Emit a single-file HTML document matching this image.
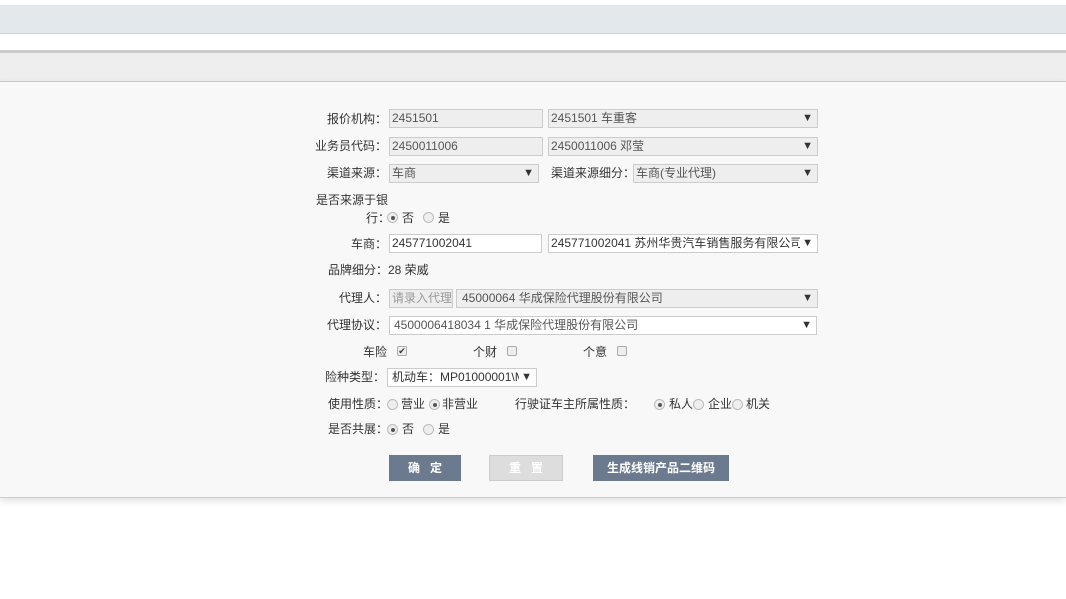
<!DOCTYPE html>
<html><head><meta charset="utf-8"><style>
*{margin:0;padding:0;box-sizing:border-box}
body{width:1066px;height:599px;background:#fff;position:relative;overflow:hidden;font-family:"Liberation Sans","Noto Sans CJK SC",sans-serif;font-size:12px;color:#333}
.a{position:absolute;white-space:nowrap;line-height:14px}
.lab{position:absolute;text-align:right;white-space:nowrap;line-height:14px}
.in{position:absolute;border:1px solid #ccc;background:#eee;height:19px;line-height:17px;padding-left:2px;color:#555;overflow:hidden;white-space:nowrap}
.w{background:#fff}
.sel:after{content:"▼";position:absolute;right:4px;top:0;font-size:11px;color:#333;background:inherit;padding-left:2px}
.r{position:absolute;width:11px;height:11px;border:1px solid #bbb;border-radius:50%;background:#eee}
.r.on:after{content:"";position:absolute;left:2.5px;top:2.5px;width:4px;height:4px;border-radius:50%;background:#555}
.c{position:absolute;width:10px;height:10px;border:1px solid #aaa;border-radius:2px;background:#eee}
.btn{position:absolute;height:26px;line-height:26px;text-align:center;color:#fff;font-weight:bold;background:#6b7a8f}
</style></head><body>
<div style="position:absolute;left:0;top:5px;width:1066px;height:29px;background:#e3e8ec;border-bottom:1px solid #cdd0d3"></div>
<div style="position:absolute;left:0;top:50px;width:1066px;height:3px;background:#ccc"></div>
<div style="position:absolute;left:0;top:53px;width:1066px;height:29px;background:#eee;border-bottom:1px solid #ccc"></div>
<div style="position:absolute;left:0;top:82px;width:1066px;height:416px;background:#f8f8f8;border-bottom:1px solid #ccc;box-shadow:0 3px 8px rgba(0,0,0,0.12)"></div>

<div class="lab" style="right:679px;top:112px">报价机构：</div>
<div class="in" style="left:389px;top:109px;width:154px">2451501</div>
<div class="in sel" style="left:548px;top:109px;width:270px">2451501 车重客</div>

<div class="lab" style="right:679px;top:139px">业务员代码：</div>
<div class="in" style="left:389px;top:137px;width:154px">2450011006</div>
<div class="in sel" style="left:548px;top:137px;width:270px">2450011006 邓莹</div>

<div class="lab" style="right:679px;top:166px">渠道来源：</div>
<div class="in sel" style="left:389px;top:164px;width:150px">车商</div>
<div class="a" style="left:551px;top:166px">渠道来源细分：</div>
<div class="in sel" style="left:633px;top:164px;width:185px">车商(专业代理)</div>

<div class="a" style="left:316px;top:193px">是否来源于银</div>
<div class="a" style="left:366px;top:211px">行：</div>
<div class="r on" style="left:387px;top:212px"></div><div class="a" style="left:402px;top:211px">否</div>
<div class="r" style="left:423px;top:212px"></div><div class="a" style="left:438px;top:211px">是</div>

<div class="lab" style="right:679px;top:237px">车商：</div>
<div class="in w" style="left:389px;top:234px;width:153px;color:#333">245771002041</div>
<div class="in w sel" style="left:548px;top:234px;width:270px;color:#333">245771002041 苏州华贵汽车销售服务有限公司</div>

<div class="a" style="left:328px;top:263px">品牌细分：28 荣威</div>

<div class="lab" style="right:679px;top:291px">代理人：</div>
<div class="in" style="left:389px;top:289px;width:64px;color:#999">请录入代理</div>
<div class="in sel" style="left:456px;top:289px;width:362px;padding-left:5px">45000064 华成保险代理股份有限公司</div>

<div class="lab" style="right:679px;top:318px">代理协议：</div>
<div class="in w sel" style="left:389px;top:316px;width:428px;padding-left:4px">4500006418034 1 华成保险代理股份有限公司</div>

<div class="a" style="left:363px;top:345px">车险</div><div class="c" style="left:397px;top:346px;font-size:9px;line-height:8px;text-align:center">✔</div>
<div class="a" style="left:473px;top:345px">个财</div><div class="c" style="left:507px;top:346px"></div>
<div class="a" style="left:583px;top:345px">个意</div><div class="c" style="left:617px;top:346px"></div>

<div class="lab" style="right:681px;top:370px">险种类型：</div>
<div class="in w sel" style="left:387px;top:368px;width:150px;padding-left:4px;color:#333">机动车：MP01000001\M</div>

<div class="a" style="left:328px;top:397px">使用性质：</div>
<div class="r" style="left:387px;top:399px"></div><div class="a" style="left:401px;top:397px">营业</div>
<div class="r on" style="left:429px;top:399px"></div><div class="a" style="left:442px;top:397px">非营业</div>
<div class="a" style="left:515px;top:397px">行驶证车主所属性质：</div>
<div class="r on" style="left:654px;top:399px"></div><div class="a" style="left:669px;top:397px">私人</div>
<div class="r" style="left:693px;top:399px"></div><div class="a" style="left:708px;top:397px">企业</div>
<div class="r" style="left:732px;top:399px"></div><div class="a" style="left:746px;top:397px">机关</div>

<div class="a" style="left:328px;top:422px">是否共展：</div>
<div class="r on" style="left:387px;top:424px"></div><div class="a" style="left:402px;top:422px">否</div>
<div class="r" style="left:423px;top:424px"></div><div class="a" style="left:438px;top:422px">是</div>

<div class="btn" style="left:389px;top:455px;width:72px">确&nbsp;&nbsp;&nbsp;定</div>
<div class="btn" style="left:489px;top:455px;width:74px;background:#ddd;border:1px solid #ccc;line-height:24px">重&nbsp;&nbsp;&nbsp;置</div>
<div class="btn" style="left:593px;top:455px;width:136px">生成线销产品二维码</div>
</body></html>
